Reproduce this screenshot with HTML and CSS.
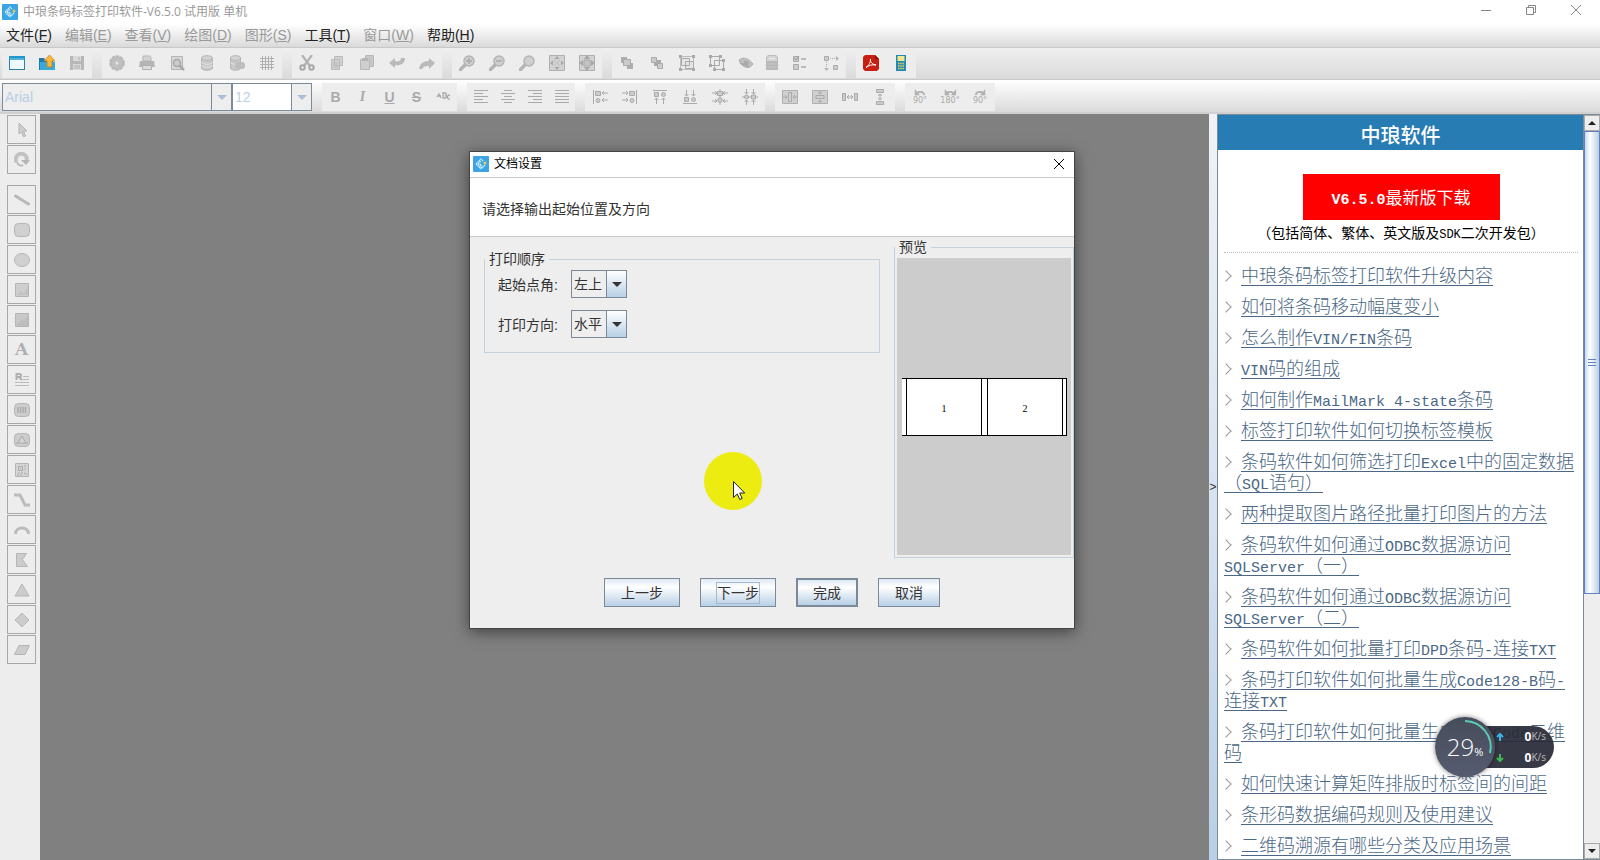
FILE: index.html
```html
<!DOCTYPE html>
<html lang="zh-CN">
<head>
<meta charset="utf-8">
<title>中琅条码标签打印软件</title>
<link rel="stylesheet" href="styles.css">
</head>
<body>
<svg class="defs" aria-hidden="true">
  <symbol id="logo" viewBox="0 0 16 16"><rect width="16" height="16" rx="1" fill="#3ba4e4"/><path d="M3 8l5-5 2 2M5 8l3-3M5 8l4 4 3-3M3 8l5 5M7 8l2 2" fill="none" stroke="#d4efff" stroke-width="1.3" stroke-dasharray="1.6 .5"/><circle cx="12" cy="7" r="1.5" fill="#e8cf56"/></symbol>
  <symbol id="lens" viewBox="0 0 16 16"><path d="M6 10l-4.500 4.500" stroke="#b4b4b4" stroke-width="3.500" stroke-linecap="round"/><circle cx="10" cy="6" r="5" fill="#cfcfcf" stroke="#b4b4b4" stroke-width="1.500"/></symbol>
  <symbol id="turn" viewBox="0 0 16 8"><path d="M4 7c0-5 8-5 9 0" fill="none" stroke="#b0b0b0" stroke-width="2"/><path d="M2 0v7h6z" fill="#b0b0b0"/></symbol>
</svg>

<header class="titlebar">
  <svg class="i16"><use href="#logo"/></svg>
  <h1>中琅条码标签打印软件-V6.5.0 试用版 单机</h1>
  <div class="winbtns">
    <button aria-label="最小化"><svg viewBox="0 0 12 12"><path d="M1 6.500h10"/></svg></button>
    <button aria-label="还原"><svg viewBox="0 0 12 12"><path d="M1.500 3.500h7v7h-7zM3.500 3.500v-2h7v7h-2"/></svg></button>
    <button aria-label="关闭"><svg viewBox="0 0 12 12"><path d="M1 1l10 10M11 1L1 11"/></svg></button>
  </div>
</header>

<nav class="menubar">
  <button>文件(<u>F</u>)</button><button disabled>编辑(<u>E</u>)</button><button disabled>查看(<u>V</u>)</button><button disabled>绘图(<u>D</u>)</button><button disabled>图形(<u>S</u>)</button><button>工具(<u>T</u>)</button><button disabled>窗口(<u>W</u>)</button><button>帮助(<u>H</u>)</button>
</nav>

<div class="toolbar main">
  <div class="group">
    <button aria-label="新建"><svg viewBox="0 0 16 16"><rect x=".5" y="1.500" width="15" height="13" fill="#eefaff" stroke="#2c7fa8"/><path d="M0 1h16v4H0z" fill="#2497c9"/><path d="M1 4h14" stroke="#7fd0ef"/></svg></button>
    <button aria-label="打开"><svg viewBox="0 0 16 16"><path d="M0 3h5l1 2h8v10H0z" fill="#2079ab"/><path d="M1 7h15v8H1z" fill="#3aa9d8"/><path d="M10.500 0L16 6h-3v6H8V6H5z" fill="#f6b73b" stroke="#c07a1c" stroke-width=".7"/></svg></button>
    <button aria-label="保存"><svg viewBox="0 0 16 16"><path d="M1 1h14v14H1z" fill="#b8b8b8"/><path d="M4 1h8v5H4zM4 9h8v6H4z" fill="#dadada"/><path d="M5 11h6M5 13h6M10 2v3" stroke="#adadad"/></svg></button>
  </div>
  <div class="group">
    <button aria-label="设置"><svg viewBox="0 0 16 16"><circle cx="8" cy="8" r="6.500" fill="#c0c0c0" stroke="#b8b8b8" stroke-width="2.500" stroke-dasharray="3.500 .6"/><circle cx="8" cy="8" r="1.500" fill="#e4e4e4"/></svg></button>
    <button aria-label="打印"><svg viewBox="0 0 16 16"><path d="M4 1h7l1 2v3H4z" fill="#d4d4d4" stroke="#b5b5b5"/><path d="M1 6h14l1 6H0z" fill="#b5b5b5"/><path d="M3.500 10.500h9v4h-9z" fill="#dcdcdc" stroke="#b0b0b0"/></svg></button>
    <button aria-label="预览"><svg viewBox="0 0 16 16"><path d="M2.500 1.500h11v13h-11z" fill="#d6d6d6" stroke="#b5b5b5"/><circle cx="8" cy="8" r="3.500" fill="#ccc" stroke="#a8a8a8" stroke-width="1.500"/><path d="M10.500 10.500L15 15" stroke="#a8a8a8" stroke-width="2.500"/></svg></button>
    <button aria-label="数据库"><svg viewBox="0 0 16 16"><path d="M2.500 3v10c0 3 11 3 11 0V3" fill="#c8c8c8" stroke="#b5b5b5"/><ellipse cx="8" cy="3" rx="5.500" ry="2.300" fill="#d4d4d4" stroke="#b5b5b5"/><path d="M2.500 7c0 3 11 3 11 0M2.500 10c0 3 11 3 11 0" fill="none" stroke="#e4e4e4"/></svg></button>
    <button aria-label="数据"><svg viewBox="0 0 16 16"><path d="M1.500 3v10c0 3 10 3 10 0V3" fill="#c8c8c8" stroke="#b5b5b5"/><ellipse cx="6.500" cy="3" rx="5" ry="2.300" fill="#d4d4d4" stroke="#b5b5b5"/><path d="M1.500 7c0 3 10 3 10 0" fill="none" stroke="#e4e4e4"/><rect x="6" y="7" width="10" height="7" rx="3" fill="#bdbdbd"/></svg></button>
    <button aria-label="网格"><svg viewBox="0 0 16 16"><path d="M3.500 1v14M6.500 1v14M9.500 1v14M12.500 1v14M1 3.500h14M1 6.500h14M1 9.500h14M1 12.500h14" stroke="#b0b0b0"/></svg></button>
  </div>
  <div class="group">
    <button aria-label="剪切"><svg viewBox="0 0 16 16"><path d="M3 0l8 11M13 0L5 11" stroke="#b2b2b2" stroke-width="2.200"/><circle cx="3.500" cy="12.500" r="2.200" fill="none" stroke="#a8a8a8" stroke-width="2"/><circle cx="12.500" cy="12.500" r="2.200" fill="none" stroke="#a8a8a8" stroke-width="2"/></svg></button>
    <button aria-label="复制"><svg viewBox="0 0 16 16"><path d="M5.500 1.500h8v9h-8zM2.500 4.500h8v10h-8z" fill="#d0d0d0" stroke="#bababa"/><path d="M4 8h5M4 10h5M4 12h5" stroke="#bababa"/></svg></button>
    <button aria-label="粘贴"><svg viewBox="0 0 16 16"><path d="M6.500.500h8v11h-8z" fill="#c8c8c8" stroke="#b8b8b8"/><path d="M1.500 4.500h9v10h-9z" fill="#cfcfcf" stroke="#b8b8b8"/><path d="M3 3h6v3H3z" fill="#b5b5b5"/></svg></button>
    <button aria-label="撤销"><svg viewBox="0 0 16 16"><path d="M0 8l6-5v3c3 1 6 0 6-3h4c0 6-5 8-10 7v3z" fill="#bababa"/></svg></button>
    <button aria-label="重做"><svg viewBox="0 0 16 16"><path d="M16 8l-6-5v3C5 6 1 8 0 14h3c2-3 4-3 7-3v3z" fill="#bababa"/></svg></button>
  </div>
  <div class="group">
    <button aria-label="放大"><svg viewBox="0 0 16 16"><use href="#lens"/><path d="M7 6h6M10 3v6" stroke="#a8a8a8" stroke-width="1.500"/></svg></button>
    <button aria-label="缩小"><svg viewBox="0 0 16 16"><use href="#lens"/><path d="M7 6h6" stroke="#a8a8a8" stroke-width="1.500"/></svg></button>
    <button aria-label="原始大小"><svg viewBox="0 0 16 16"><use href="#lens"/></svg></button>
    <button aria-label="适合窗口"><svg viewBox="0 0 16 16"><path d="M.5.5h15v15H.5z" fill="#d2d2d2" stroke="#b0b0b0"/><path d="M8 1l2.500 3h-5zM8 15l2.500-3h-5zM1 8l3-2.500v5zM15 8l-3-2.500v5z" fill="#a8a8a8"/><path d="M5 5l6 6M11 5l-6 6" stroke="#b0b0b0" stroke-dasharray="1 1"/></svg></button>
    <button aria-label="缩放到选区"><svg viewBox="0 0 16 16"><path d="M.5.5h15v15H.5z" fill="#d2d2d2" stroke="#b0b0b0"/><path d="M8 0l3 4H5zM8 16l3-4H5zM0 8l4-3v6zM16 8l-4-3v6z" fill="#a8a8a8"/><path d="M5 5h6v6H5z" fill="#c5c5c5" stroke="#aaa"/></svg></button>
  </div>
  <div class="group">
    <button aria-label="置前"><svg viewBox="0 0 16 16"><path d="M2 2h6v6H2zM8 8h6v6H8z" fill="#aeaeae"/><path d="M4.500 4.500h7v6h-7z" fill="#ccc" stroke="#aaa"/></svg></button>
    <button aria-label="置后"><svg viewBox="0 0 16 16"><path d="M5 5h7v6H5z" fill="#aaa"/><path d="M2.500 2.500h5v5h-5zM8.500 8.500h5v5h-5z" fill="#ccc" stroke="#aaa"/></svg></button>
    <button aria-label="组合"><svg viewBox="0 0 16 16"><path d="M1.500 1.500h13v13h-13z" fill="none" stroke="#bbb"/><path d="M2.500 3.500h8v7h-8zM6.500 6.500h8v7h-8z" fill="#e5e5e5" stroke="#aaa"/><path d="M0 0h3v3H0zM13 0h3v3h-3zM0 13h3v3H0zM13 13h3v3h-3z" fill="#aaa"/></svg></button>
    <button aria-label="取消组合"><svg viewBox="0 0 16 16"><path d="M1.500 1.500h9v9h-9zM5.500 5.500h9v9h-9z" fill="none" stroke="#aaa"/><path d="M0 0h3v3H0zM10 0h3v3h-3zM0 9h3v3H0zM4 13h3v3H4zM13 4h3v3h-3zM13 13h3v3h-3z" fill="#aaa"/></svg></button>
    <button class="w28" aria-label="隐藏"><svg viewBox="0 0 16 16"><path d="M1 5c5-4 10-1 14 4-4 6-11 4-14-4z" fill="#c0c0c0" stroke="#adadad"/><circle cx="8" cy="8" r="2.500" fill="#aaa"/><path d="M2 8l9 4" stroke="#aaa" stroke-width="1.500"/></svg></button>
    <button class="w24" aria-label="锁定"><svg viewBox="0 0 16 16"><path d="M2.500 7V3q0-2.500 2.500-2.500h6q2.500 0 2.500 2.500v4" fill="#d4d4d4" stroke="#bdbdbd"/><path d="M2 6h12v9H2z" fill="#b8b8b8"/><path d="M5 3.500h6" stroke="#eee"/><path d="M3 9h10M3 12h10" stroke="#c6c6c6"/></svg></button>
    <button class="w32" aria-label="属性"><svg viewBox="0 0 16 16"><path d="M1.500 1.500h5v5h-5zM1.500 9.500h5v5h-5z" fill="#ccc" stroke="#aaa"/><path d="M9 4h5M9 12h5" stroke="#aaa" stroke-width="1.500"/><path d="M2 3l2 2 3-4" fill="none" stroke="#999"/></svg></button>
    <button aria-label="排序"><svg viewBox="0 0 16 16"><path d="M1.500 1.500h4v4h-4zM10.500 10.500h4v4h-4z" fill="#ccc" stroke="#aaa"/><path d="M7 3.500h6M3.500 7v6" stroke="#aaa" stroke-dasharray="1 1"/><path d="M13 1l3 2.500L13 6zM1 13l2.500 3L6 13z" fill="#b5b5b5"/></svg></button>
  </div>
  <div class="group">
    <button aria-label="导出 PDF"><svg viewBox="0 0 16 16"><path d="M2 0h10l4 4v10l-2 2H2l-2-2V2z" fill="#c81f10"/><path d="M12 0v4h4z" fill="#7d160d"/><path d="M3 12.500c3-2 5-6 4.500-8.500-1 3 3 6 5.500 6-4-.7-7 .3-10 2.500z" fill="none" stroke="#fff"/></svg></button>
    <button aria-label="计算器"><svg viewBox="0 0 16 16"><path d="M3 0h10v16H3z" fill="#2389b5"/><path d="M4.500 1h7v5h-7z" fill="#f6e58c"/><path d="M5 8.500h6M5 11h6M5 13.500h6" stroke="#e8cf56" stroke-width="1.500" stroke-dasharray="1.500 .7"/></svg></button>
  </div>
</div>

<div class="toolbar format">
  <span class="combo font off"><select aria-label="字体" disabled><option>Arial</option></select></span>
  <span class="combo size off"><select aria-label="字号" disabled><option>12</option></select></span>
  <div class="group text">
    <button aria-label="粗体"><b>B</b></button><button aria-label="斜体"><i>I</i></button><button aria-label="下划线"><u>U</u></button><button aria-label="删除线"><s>S</s></button>
    <button aria-label="弧形文字"><svg viewBox="0 0 16 16"><path d="M1 8l2-3 2 4M2 7h3M7 4v5h2c2 0 2-2 0-2.500 1.500 0 2-2.500 0-2.500zM14 6c-4 0-3 5 0 4" fill="none" stroke="#aaa" stroke-width="1.300"/></svg></button>
  </div>
  <div class="group align">
    <button aria-label="左对齐"><svg viewBox="0 0 16 16"><path d="M1 1.500h14M1 4.500h9M1 7.500h14M1 10.500h9M1 13.500h14" stroke="#aaa"/></svg></button>
    <button aria-label="居中"><svg viewBox="0 0 16 16"><path d="M4 1.500h8M1 4.500h14M4 7.500h8M1 10.500h14M4 13.500h8" stroke="#aaa"/></svg></button>
    <button aria-label="右对齐"><svg viewBox="0 0 16 16"><path d="M1 1.500h14M6 4.500h9M1 7.500h14M6 10.500h9M1 13.500h14" stroke="#aaa"/></svg></button>
    <button aria-label="两端对齐"><svg viewBox="0 0 16 16"><path d="M1 1.500h14M1 4.500h14M1 7.500h14M1 10.500h14M1 13.500h14" stroke="#aaa"/></svg></button>
  </div>
  <div class="group">
    <button aria-label="靠左"><svg viewBox="0 0 16 16"><path d="M1.500 1v14M10 4h6M10 11h6M12 2l-2 2 2 2M12 9l-2 2 2 2" fill="none" stroke="#aaa"/><path d="M3.500 2.500h5v4h-5z" fill="#ccc" stroke="#aaa"/><circle cx="6" cy="11.500" r="2" fill="#ccc" stroke="#aaa"/></svg></button>
    <button aria-label="靠右"><svg viewBox="0 0 16 16"><path d="M14.500 1v14M0 4h6M0 11h6M4 2l2 2-2 2M4 9l2 2-2 2" fill="none" stroke="#aaa"/><path d="M7.500 2.500h5v4h-5z" fill="#ccc" stroke="#aaa"/><circle cx="10" cy="11.500" r="2" fill="#ccc" stroke="#aaa"/></svg></button>
    <button aria-label="靠上"><svg viewBox="0 0 16 16"><path d="M1 1.500h14M4.500 9v6M11.500 9v6M2.500 11l2-2 2 2M9.500 11l2-2 2 2" fill="none" stroke="#aaa"/><path d="M2.500 3.500h4v4h-4z" fill="#ccc" stroke="#aaa"/><circle cx="11.500" cy="5.500" r="2" fill="#ccc" stroke="#aaa"/></svg></button>
    <button aria-label="靠下"><svg viewBox="0 0 16 16"><path d="M1 14.500h14M4.500 1v6M11.500 1v6M2.500 5l2 2 2-2M9.500 5l2 2 2-2" fill="none" stroke="#aaa"/><path d="M2.500 8.500h4v4h-4z" fill="#ccc" stroke="#aaa"/><circle cx="11.500" cy="10.500" r="2" fill="#ccc" stroke="#aaa"/></svg></button>
    <button aria-label="水平居中"><svg viewBox="0 0 16 16"><path d="M8 0v16M0 4h5M11 4h5M0 12h5M11 12h5M3 2l2 2-2 2M13 2l-2 2 2 2M3 10l2 2-2 2M13 10l-2 2 2 2" fill="none" stroke="#aaa"/><path d="M5.500 2.500h5v4h-5z" fill="#ccc" stroke="#aaa"/><circle cx="8" cy="11" r="2.300" fill="#ccc" stroke="#aaa"/></svg></button>
    <button aria-label="垂直居中"><svg viewBox="0 0 16 16"><path d="M0 8h16M4.500 0v5M11.500 0v5M4.500 11v5M11.500 11v5M2.500 3l2 2 2-2M9.500 3l2 2 2-2M2.500 13l2-2 2 2M9.500 13l2-2 2 2" fill="none" stroke="#aaa"/><circle cx="4.500" cy="8" r="2" fill="#ccc" stroke="#aaa"/><path d="M9.500 6h4v4h-4z" fill="#ccc" stroke="#aaa"/></svg></button>
  </div>
  <div class="group">
    <button aria-label="页面水平居中"><svg viewBox="0 0 16 16"><path d="M.5 1.500h15v13H.5z" fill="#d0d0d0" stroke="#b0b0b0"/><path d="M6.500 3.500h3v9h-3zM1 8h4M11 8h4M3 6l2 2-2 2M13 6l-2 2 2 2" fill="none" stroke="#aaa"/></svg></button>
    <button aria-label="页面垂直居中"><svg viewBox="0 0 16 16"><path d="M.5 1.500h15v13H.5z" fill="#d0d0d0" stroke="#b0b0b0"/><path d="M4 6.500h8v3H4zM8 2v3M8 11v3M6 3l2 2 2-2M6 13l2-2 2 2" fill="none" stroke="#aaa"/></svg></button>
    <button aria-label="水平等距"><svg viewBox="0 0 16 16"><path d="M.5 4.500h3v7h-3zM12.500 4.500h3v7h-3z" fill="#ccc" stroke="#aaa"/><path d="M5 8h6M7 6L5 8l2 2M9 6l2 2-2 2" fill="none" stroke="#aaa"/></svg></button>
    <button aria-label="垂直等距"><svg viewBox="0 0 16 16"><path d="M4.500.5h7v3h-7zM4.500 12.500h7v3h-7z" fill="#ccc" stroke="#aaa"/><path d="M8 5v6M6 7l2-2 2 2M6 9l2 2 2-2" fill="none" stroke="#aaa"/></svg></button>
  </div>
  <div class="group rotate">
    <button><svg viewBox="0 0 16 8"><use href="#turn"/></svg>90°</button>
    <button><svg viewBox="0 0 16 8"><use href="#turn"/><path d="M15 0v7H9z" fill="#b0b0b0"/></svg>180°</button>
    <button><svg class="flip" viewBox="0 0 16 8"><use href="#turn"/></svg>90°</button>
  </div>
</div>

<main class="work">
  <aside class="tools">
    <button aria-label="选择"><svg viewBox="0 0 16 16"><path d="M5 1l8 8H9.500l2 5-2 .8-2-4.800L5 12z" fill="#ccc" stroke="#b5b5b5"/></svg></button>
    <button class="last" aria-label="旋转"><svg viewBox="0 0 16 16"><path d="M2.500 10a5.500 5.500 0 1 1 10-1" fill="none" stroke="#c2c2c2" stroke-width="4"/><path d="M7 8h9l-4 5z" fill="#b5b5b5"/><path d="M3 10c1 4 5 4 6 3" fill="none" stroke="#bbb" stroke-width="2"/></svg></button>
    <button aria-label="直线"><svg viewBox="0 0 16 16"><path d="M1.500 4l13 8" stroke="#b8b8b8" stroke-width="3" stroke-linecap="round"/></svg></button>
    <button aria-label="圆角矩形"><svg viewBox="0 0 16 16"><rect x=".5" y="1.500" width="15" height="13" rx="4" fill="#d0d0d0" stroke="#b5b5b5"/></svg></button>
    <button aria-label="椭圆"><svg viewBox="0 0 16 16"><ellipse cx="8" cy="8" rx="7.500" ry="6.500" fill="#d0d0d0" stroke="#b5b5b5"/></svg></button>
    <button aria-label="图片"><svg viewBox="0 0 16 16"><path d="M1.500 1.500h13v13h-13z" fill="#cecece" stroke="#b5b5b5"/><path d="M3 13l4-4 3 2 4-6v8z" fill="#c2c2c2"/></svg></button>
    <button aria-label="矢量图"><svg viewBox="0 0 16 16"><path d="M1.500 1.500h13v13h-13z" fill="#c8c8c8" stroke="#b5b5b5"/><path d="M2 14l6-7 2 2 4-5v10z" fill="#bebebe"/></svg></button>
    <button aria-label="文字"><b>A</b></button>
    <button aria-label="富文本"><svg viewBox="0 0 16 16"><path d="M2.500 8V2h3c2 0 2 3 0 3h-3M5 5l3 3" fill="none" stroke="#b0b0b0" stroke-width="2"/><path d="M9 4.500h6M9 7.500h6M1 10.500h14M1 13.500h14" stroke="#bbb"/></svg></button>
    <button aria-label="条形码"><svg viewBox="0 0 16 16"><rect x=".5" y="1.500" width="15" height="13" rx="4" fill="#ccc" stroke="#b5b5b5"/><path d="M4 5v6M6.500 5v6M9 5v6M11.500 5v6" stroke="#aaa" stroke-width="1.300"/></svg></button>
    <button aria-label="形状码"><svg viewBox="0 0 16 16"><rect x=".5" y="1.500" width="15" height="13" rx="4" fill="#ccc" stroke="#b5b5b5"/><path d="M8 4l4 7H4zM2 11h3M11 11h3" fill="#d5d5d5" stroke="#aaa"/></svg></button>
    <button aria-label="二维码"><svg viewBox="0 0 16 16"><path d="M1.500 1.500h13v13h-13z" fill="#d5d5d5" stroke="#b5b5b5"/><path d="M4.500 4.500h4v4h-4z" fill="none" stroke="#aaa"/><path d="M11 3v6M4 11h7M12 11v2M3 13h6M6 6.500h1" stroke="#aaa" stroke-dasharray="2 1"/></svg></button>
    <button aria-label="连线"><svg viewBox="0 0 16 16"><path d="M0 3h6l5 10h5" fill="none" stroke="#bbb" stroke-width="3"/></svg></button>
    <button aria-label="弧线"><svg viewBox="0 0 16 16"><path d="M1.500 12c0-8 13-8 13 0" fill="none" stroke="#bbb" stroke-width="3"/></svg></button>
    <button aria-label="多边形"><svg viewBox="0 0 16 16"><path d="M2.500 1.500h10l-4 6 5 7h-11z" fill="#ccc" stroke="#b5b5b5"/></svg></button>
    <button aria-label="三角形"><svg viewBox="0 0 16 16"><path d="M8 2l7 12H1z" fill="#ccc" stroke="#b5b5b5"/></svg></button>
    <button aria-label="菱形"><svg viewBox="0 0 16 16"><path d="M8 1l7 7-7 7-7-7z" fill="#ccc" stroke="#b5b5b5"/></svg></button>
    <button aria-label="平行四边形"><svg viewBox="0 0 16 16"><path d="M5 3.500h10.500L11 12.500H.5z" fill="#ccc" stroke="#b5b5b5"/></svg></button>
  </aside>

  <section class="canvas">
    <div class="dialog" role="dialog" aria-labelledby="dlg-title">
      <header>
        <svg class="i16"><use href="#logo"/></svg>
        <h2 id="dlg-title">文档设置</h2>
        <button aria-label="关闭"><svg viewBox="0 0 12 12"><path d="M1 1l10 10M11 1L1 11" stroke="#000"/></svg></button>
      </header>
      <p class="prompt">请选择输出起始位置及方向</p>
      <div class="settings">
        <fieldset class="order">
          <legend>打印顺序</legend>
          <label for="corner">起始点角:</label>
          <span class="combo"><select id="corner"><option>左上</option></select></span>
          <label for="direction">打印方向:</label>
          <span class="combo"><select id="direction"><option>水平</option></select></span>
        </fieldset>
        <fieldset class="preview">
          <legend>预览</legend>
          <div class="stage"><div class="sheet"><span>1</span><span>2</span></div></div>
        </fieldset>
      </div>
      <footer>
        <button class="wide">上一步</button><button class="wide"><span class="focus">下一步</span></button><button class="default">完成</button><button>取消</button>
      </footer>
      <div class="pointer"><svg viewBox="0 0 13 20"><path d="M.5.500v16l3.800-3.500 2.500 5.500 2.400-1-2.500-5.500h5z" fill="#fff" stroke="#222"/></svg></div>
    </div>
  </section>

  <button class="splitter" aria-label="收起">&gt;</button>

  <aside class="news">
    <div class="page">
      <h2>中琅软件</h2>
      <div class="download">
        <a class="get" href="#"><span class="lat">V6.5.0</span>最新版下载</a>
        <p>（包括简体、繁体、英文版及<span class="lat">SDK</span>二次开发包）</p>
      </div>
      <ul>
        <li><a href="#">中琅条码标签打印软件升级内容</a></li>
        <li><a href="#">如何将条码移动幅度变小</a></li>
        <li><a href="#">怎么制作<span class="lat">VIN/FIN</span>条码</a></li>
        <li><a href="#"><span class="lat">VIN</span>码的组成</a></li>
        <li><a href="#">如何制作<span class="lat">MailMark 4-state</span>条码</a></li>
        <li><a href="#">标签打印软件如何切换标签模板</a></li>
        <li><a href="#">条码软件如何筛选打印<span class="lat">Excel</span>中的固定数据（<span class="lat">SQL</span>语句）</a></li>
        <li><a href="#">两种提取图片路径批量打印图片的方法</a></li>
        <li><a href="#">条码软件如何通过<span class="lat">ODBC</span>数据源访问<span class="lat">SQLServer</span>（一）</a></li>
        <li><a href="#">条码软件如何通过<span class="lat">ODBC</span>数据源访问<span class="lat">SQLServer</span>（二）</a></li>
        <li><a href="#">条码软件如何批量打印<span class="lat">DPD</span>条码<span class="lat">-</span>连接<span class="lat">TXT</span></a></li>
        <li><a href="#">条码打印软件如何批量生成<span class="lat">Code128-B</span>码<span class="lat">-</span>连接<span class="lat">TXT</span></a></li>
        <li><a href="#">条码打印软件如何批量生成<span class="lat">MaxiCode</span>二维码</a></li>
        <li><a href="#">如何快速计算矩阵排版时标签间的间距</a></li>
        <li><a href="#">条形码数据编码规则及使用建议</a></li>
        <li><a href="#">二维码溯源有哪些分类及应用场景</a></li>
      </ul>
    </div>
    <div class="scroll">
      <button aria-label="向上"><svg viewBox="0 0 8 4"><path d="M0 4l4-4 4 4z"/></svg></button>
      <div class="track"><div class="thumb"></div></div>
      <button aria-label="向下"><svg viewBox="0 0 8 4"><path d="M0 0h8L4 4z"/></svg></button>
    </div>
  </aside>
</main>

<div class="meter">
  <div class="dial"><svg viewBox="0 0 60 60"><path d="M30 4a26 26 0 0 1 25 32" fill="none" stroke="#5bcdb4" stroke-width="2"/></svg><strong>29</strong><small>%</small></div>
  <div class="rates">
    <div><svg viewBox="0 0 8 8"><path d="M4 8V1M1 4l3-3 3 3" stroke="#38b4e8"/></svg><b>0</b><small>K/s</small></div>
    <div><svg viewBox="0 0 8 8"><path d="M4 0v7M1 4l3 3 3-3" stroke="#3fb950"/></svg><b>0</b><small>K/s</small></div>
  </div>
</div>
</body>
</html>
```
FILE: styles.css
```css
* { box-sizing: border-box; }
body {
  margin: 0;
  height: 100vh;
  display: flex;
  flex-direction: column;
  overflow: hidden;
  background: #ededed;
  color: #333;
  font: 14px/20px "Liberation Sans", "Noto Sans CJK SC", sans-serif;
}
button, select { font: inherit; color: inherit; }
button { padding: 0; border: 0; background: none; }
svg { display: block; fill: none; }
h1, h2, p, ul { margin: 0; padding: 0; font-weight: normal; }
.defs { position: absolute; width: 0; height: 0; }
.i16 { width: 16px; height: 16px; }

/* title bar and menus */
.titlebar { display: flex; align-items: center; gap: 5px; height: 24px; padding: 0 2px; background: #fff; }
.titlebar h1 { flex: 1; color: #999; font-size: 12px; font-family: "Open Sans", "Noto Sans CJK SC", sans-serif; }
.winbtns { display: flex; padding-bottom: 4px; }
.winbtns button { width: 45px; display: grid; place-items: center; }
.winbtns svg { width: 12px; height: 12px; stroke: #888; }
.menubar { display: flex; gap: 1px; height: 24px; padding-bottom: 2px; background: linear-gradient(#fff, #dadada); border-bottom: 1px solid #c8c8c8; }
.menubar button { padding: 0 6px; color: #222; }
.menubar button:disabled { color: #999; }

/* toolbars */
.toolbar { display: flex; gap: 10px; border-bottom: 1px solid #c8c8c8; }
.toolbar.main { height: 32px; padding: 0 0 1px 2px; background: linear-gradient(#f0f0f0, #dadada); }
.toolbar.format { height: 34px; padding: 3px 0 1px 2px; background: linear-gradient(#fff, #dadada); border-bottom: 2px solid #d0d0d0; }
.group { display: flex; background: #ededed; }
.group button { width: 30px; display: grid; place-content: center; color: #aaa; }
.group svg { width: 16px; height: 16px; }
.group .w28 { width: 28px; }
.group .w24 { width: 24px; }
.group .w32 { width: 32px; }
.group.text button, .group.align button { width: 27px; }
.group.text i { font-family: "Liberation Serif", serif; font-weight: bold; }
.group.text u, .group.text s { font-weight: bold; }
.group.rotate { font: 8px/9px "DejaVu Sans", sans-serif; }
.group.rotate button { justify-items: center; }
.group.rotate svg { width: 14px; height: 7px; }
.flip { transform: scaleX(-1); }

/* drop-downs */
.combo { position: relative; display: inline-block; width: 56px; height: 28px; }
.combo select {
  appearance: none;
  width: 100%;
  height: 100%;
  padding: 0 0 0 2px;
  border: 1px solid #7a8a99;
  border-radius: 0;
  background: #eee;
}
.combo::before { content: ""; position: absolute; inset: 1px 1px 1px auto; width: 19px; border-left: 1px solid #7a8a99; background: linear-gradient(#fff, #b8cfe5); pointer-events: none; }
.combo::after { content: ""; position: absolute; right: 5px; top: 12px; width: 10px; height: 5px; background: #333; clip-path: polygon(0 0, 100% 0, 50% 100%); pointer-events: none; }
.combo.off select { color: #b8cfe5; opacity: 1; }
.combo.off::before { background: #eee; }
.combo.off::after { background: #a9bfd6; }
.combo.font { width: 230px; }
.combo.size { width: 80px; margin-left: -10px; }
.combo.size select { background: #fff; }

/* work area */
.work { flex: 1; display: flex; min-height: 0; }
.tools { width: 40px; padding: 1px 0 0 7px; display: flex; flex-direction: column; gap: 1px; }
.tools button { width: 29px; height: 29px; display: grid; place-content: center; border: 1px solid #a8a8a8; color: #b0b0b0; font: 17px/19px "DejaVu Serif", serif; }
.tools .last { margin-bottom: 10px; }
.tools svg { width: 16px; height: 16px; }
.canvas { flex: 1; position: relative; background: #808080; overflow: hidden; }
.splitter { width: 8px; background: linear-gradient(#f0f2f5, #d8e3f0 50%, #b8cfe5); color: #333; font-size: 12px; }

/* dialog */
.dialog { position: absolute; left: 429px; top: 37px; width: 606px; border: 1px solid #444; background: #eee; box-shadow: 0 3px 14px rgba(0, 0, 0, .5); }
.dialog header { display: flex; align-items: center; gap: 5px; height: 26px; padding: 0 9px 2px 3px; background: #fff; border-bottom: 1px solid #c8c8c8; color: #000; }
.dialog h2 { flex: 1; font-size: 12px; }
.dialog header button svg { width: 12px; height: 12px; }
.prompt { padding: 21px 12px 17px; background: #fff; border-bottom: 1px solid #c8c8c8; }
.settings { display: flex; justify-content: space-between; align-items: flex-start; }
fieldset { margin: 0; border: 1px solid #c3d0de; min-width: 0; }
legend { padding: 0 4px; }
.order { display: grid; grid-template-columns: 61px auto; justify-content: start; align-items: center; gap: 12px; width: 396px; margin: 12px 0 0 14px; padding: 1px 13px 14px; }
.order legend { margin-left: -13px; }
.order label { padding-top: 2px; }
.preview { width: 180px; padding: 1px 2px 2px; }
.preview legend { margin-left: -2px; }
.stage { height: 297px; display: flex; align-items: center; padding: 0 4px 0 5px; background: #ccc; }
.sheet { flex: 1; display: flex; gap: 5px; height: 58px; padding: 0 3px 0 4px; border: 1px solid #000; border-left: 0; background: #fff; }
.sheet span { flex: 1; display: grid; place-content: center; padding-top: 4px; border: solid #000; border-width: 0 1px; color: #000; font: 10px/12px "Liberation Serif", serif; }
.dialog footer { display: flex; justify-content: center; gap: 20px; padding: 20px 0 21px; }
.dialog footer button { width: 62px; height: 29px; border: 1px solid #7a8a99; background: linear-gradient(#dfe9f3, #fff 30%, #b8cfe5); }
.dialog footer .wide { width: 76px; }
.dialog footer .default { border-width: 2px; }
.focus { display: inline-block; border: 1px solid #a3b8cc; }
.pointer { position: absolute; left: 234px; top: 300px; width: 58px; height: 58px; border-radius: 50%; background: #ecec10; }
.pointer svg { width: 13px; height: 20px; margin: 29px 0 0 29px; }

/* news panel */
.news { width: 383px; display: flex; border: 1px solid #7a8a99; border-right: 0; }
.page { flex: 1; min-width: 0; overflow: hidden; background: #fff; color: #000; }
.page h2 { padding-top: 7px; background: #277cb4; color: #fff; font-size: 20px; line-height: 28px; text-align: center; font-weight: 500; }
.download { margin: 0 5px 0 6px; padding: 24px 0 9px; border-bottom: 1px dotted #bbb; text-align: center; white-space: nowrap; }
.get { display: block; width: 197px; margin: 0 auto; padding-top: 4px; background: #f00; color: #fff; font-size: 17px; line-height: 42px; text-decoration: none; }
.lat { font-family: "Liberation Mono", monospace; line-height: 1; }
.get .lat { font-size: 15px; font-weight: bold; }
.download p { padding-top: 3px; }
.download p .lat { font-size: 12px; }
.page ul { list-style: none; margin: 0 2px 0 6px; padding-top: 8px; font-size: 18px; line-height: 21px; font-weight: 300; }
.page li { padding: 5px 0; }
.page li::before { content: ""; display: inline-block; width: 7px; height: 7px; margin: 0 11px 2px -2px; border: solid #999; border-width: 1px 1px 0 0; transform: rotate(45deg); }
.page li a { color: #4a6785; text-underline-offset: 3px; text-decoration-thickness: 1px; }
.page li .lat { font-size: 15px; }
.scroll { width: 17px; display: flex; flex-direction: column; background: #eee; border-left: 1px solid #7a8a99; }
.scroll button { height: 16px; display: grid; place-content: center; border: 1px solid #aaa; }
.scroll svg { width: 8px; height: 4px; fill: #222; }
.track { flex: 1; }
.thumb { height: 65%; border: 1px solid #6382bf; background: linear-gradient(#6382bf 1px, transparent 1px, transparent 3px, #6382bf 3px, #6382bf 4px, transparent 4px, transparent 6px, #6382bf 6px) center / 8px 7px no-repeat, linear-gradient(90deg, #c8daf0, #fff 35%, #b8cfe5); }

/* floating system meter */
.meter { position: absolute; right: 46px; bottom: 83px; display: flex; align-items: center; color: #fff; font-family: "Open Sans", sans-serif; }
.dial { position: relative; z-index: 1; width: 60px; height: 60px; display: flex; align-items: baseline; justify-content: center; border-radius: 50%; background: linear-gradient(#464d5a, #565b70); box-shadow: 0 0 5px rgba(0, 0, 0, .5); line-height: 60px; }
.dial svg { position: absolute; inset: 0; }
.dial strong { font-size: 24px; font-weight: 300; }
.dial small { font-size: 11px; }
.rates { width: 74px; height: 42px; margin-left: -15px; padding: 0 8px 0 16px; border-radius: 0 21px 21px 0; background: rgba(38, 40, 54, .92); font-size: 12px; line-height: 21px; }
.rates div { display: flex; align-items: center; }
.rates svg { width: 8px; height: 8px; margin-right: auto; stroke-width: 2; }
.rates small { font-size: 10px; color: #bbb; }
```
